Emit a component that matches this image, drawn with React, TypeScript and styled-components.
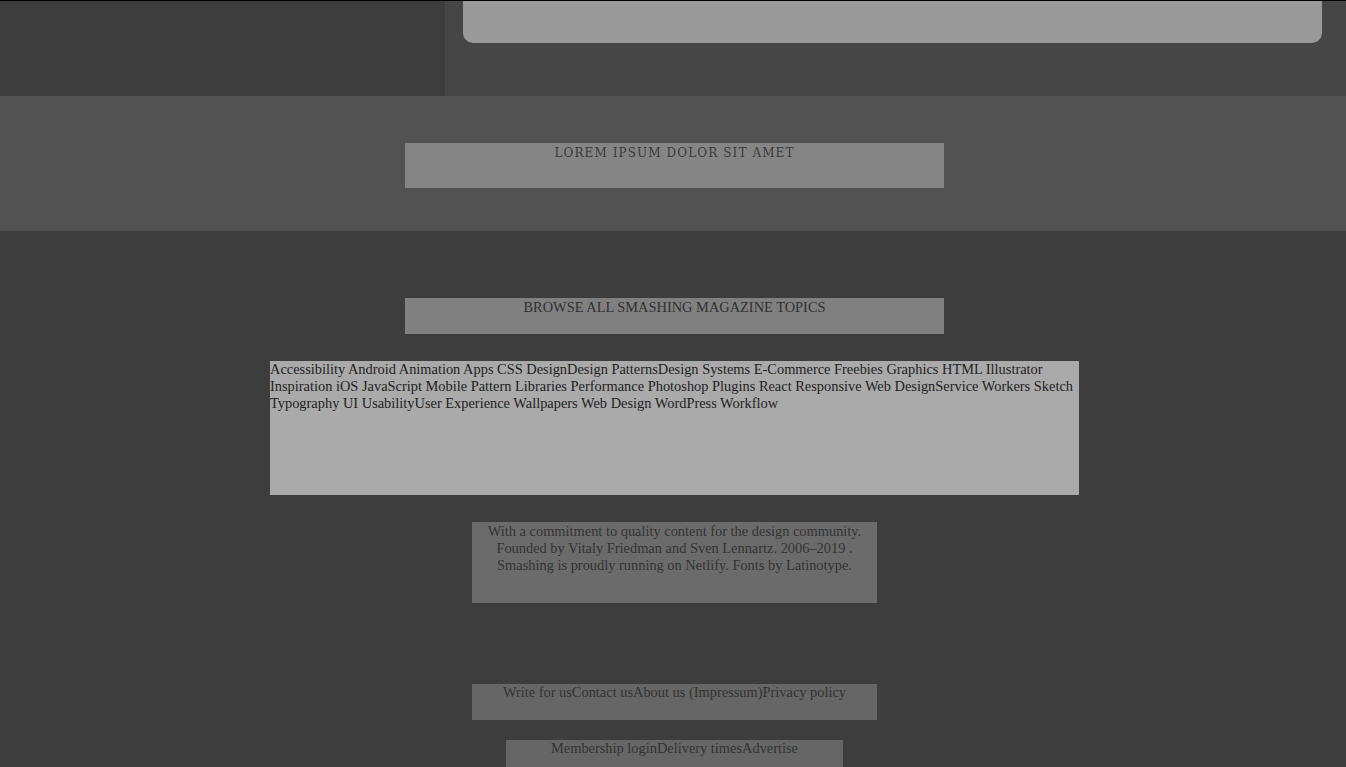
import React from 'react';
import styled, { createGlobalStyle } from 'styled-components';

const Global = createGlobalStyle`
  html, body {
    margin: 0;
    padding: 0;
    background: #3d3d3d;
  }
  body {
    font-family: "Liberation Serif", "Times New Roman", serif;
    border-top: 1px solid #000;
  }
`;

const TopRow = styled.div`
  display: flex;
  height: 95px;
`;
const Sidebar = styled.div`
  width: 445px;
  background: #3d3d3d;
`;
const CardArea = styled.div`
  flex: 1;
  background: #464646;
  padding: 0 24px 0 18px;
`;
const Card = styled.div`
  height: 42px;
  background: #999999;
  border-radius: 0 0 10px 10px;
`;

const Band = styled.div`
  height: 135px;
  box-sizing: border-box;
  background: #525252;
  padding: 47px 0 0 3px;
  display: flex;
  justify-content: center;
  align-items: flex-start;
`;
const Banner = styled.div`
  width: 539px;
  height: 45px;
  background: #858585;
  color: #3a3a3a;
  font-family: "DejaVu Serif", "Liberation Serif", serif;
  font-size: 12px;
  letter-spacing: 1.1px;
  text-align: center;
  padding-top: 1px;
  box-sizing: border-box;
  line-height: 18px;
`;

const Main = styled.div`
  display: flex;
  flex-direction: column;
  align-items: center;
  padding: 67px 0 0 3px;
`;
const Block = styled.div<{ $w: number; $h: number; $bg: string; $mt: number; $pt?: number; $align?: string; $ink?: string }>`
  width: ${p => p.$w}px;
  height: ${p => p.$h}px;
  margin-top: ${p => p.$mt}px;
  padding-top: ${p => p.$pt || 0}px;
  background: ${p => p.$bg};
  text-align: ${p => p.$align || 'center'};
  color: ${p => p.$ink || '#333'};
  font-size: 14.4px;
  line-height: 17px;
  box-sizing: border-box;
`;
const Heading = styled.div`
  font-size: 14.4px;
  line-height: 17px;
  padding-top: 1px;
  color: #303030;
`;

const topics = [
  'Accessibility ', 'Android ', 'Animation ', 'Apps ', 'CSS ', 'Design', 'Design Patterns',
  'Design Systems ', 'E-Commerce ', 'Freebies ', 'Graphics ', 'HTML ', 'Illustrator ', 'Inspiration ',
  'iOS ', 'JavaScript ', 'Mobile ', 'Pattern Libraries ', 'Performance ', 'Photoshop ', 'Plugins ',
  'React ', 'Responsive Web Design', 'Service Workers ', 'Sketch ', 'Typography ', 'UI ', 'Usability',
  'User Experience ', 'Wallpapers ', 'Web Design ', 'WordPress ', 'Workflow',
];

const Topic = styled.span``;

const App: React.FC = () => (
  <>
    <Global />
    <TopRow>
      <Sidebar />
      <CardArea>
        <Card />
      </CardArea>
    </TopRow>
    <Band>
      <Banner>LOREM IPSUM DOLOR SIT AMET</Banner>
    </Band>
    <Main>
      <Block $w={539} $h={36} $bg="#808080" $mt={0}>
        <Heading>BROWSE ALL SMASHING MAGAZINE TOPICS</Heading>
      </Block>
      <Block $w={809} $h={134} $bg="#aaaaaa" $mt={27} $align="left" $ink="#222">
        {topics.map(t => (
          <Topic key={t}>{t}</Topic>
        ))}
      </Block>
      <Block $w={405} $h={81} $bg="#6b6b6b" $mt={27} $pt={1}>
        With a commitment to quality content for the design community.
        <br />
        Founded by Vitaly Friedman and Sven Lennartz. 2006–2019 .
        <br />
        Smashing is proudly running on Netlify. Fonts by Latinotype.
      </Block>
      <Block $w={405} $h={36} $bg="#666666" $mt={81}>
        Write for usContact usAbout us (Impressum)Privacy policy
      </Block>
      <Block $w={337} $h={36} $bg="#666666" $mt={20}>
        Membership loginDelivery timesAdvertise
      </Block>
    </Main>
  </>
);

export default App;
